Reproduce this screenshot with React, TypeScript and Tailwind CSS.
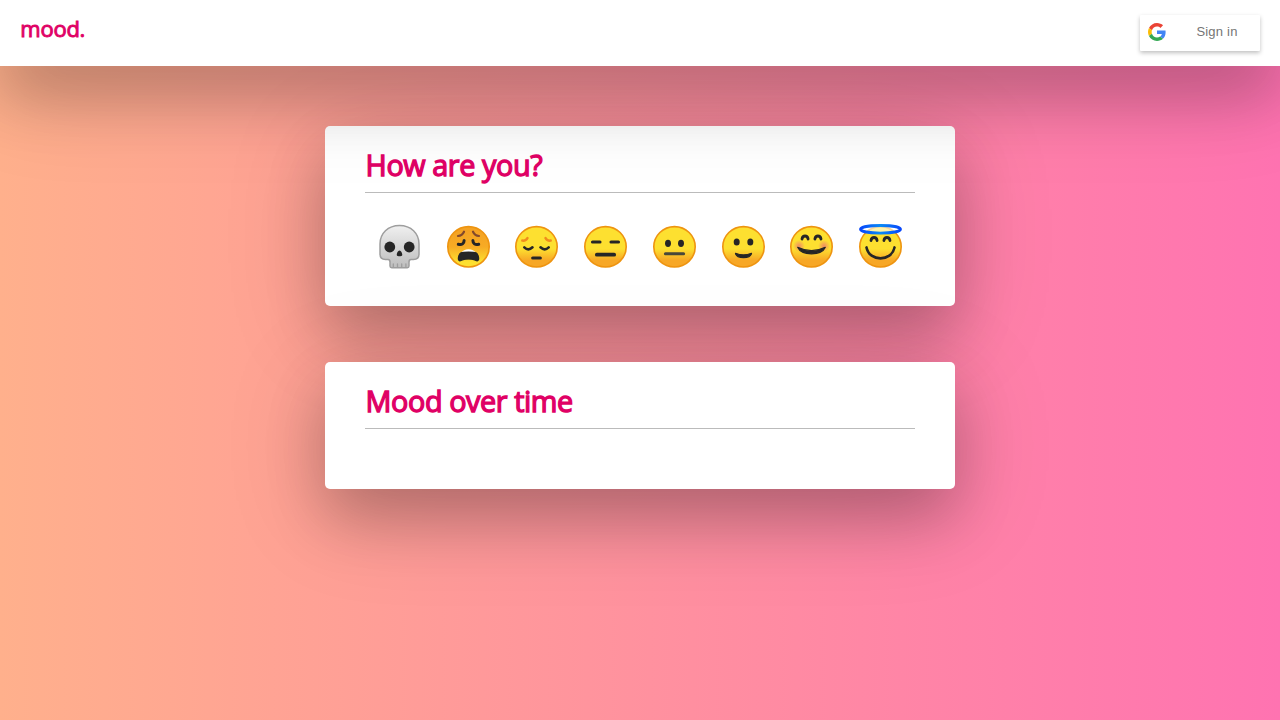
import type { ReactNode } from "react";

const INK = "#262626";

function Face({ label, fill = "url(#face)", children }: { label: string; fill?: string; children: ReactNode }) {
  return (
    <button aria-label={label} className="flex h-[50px] items-start justify-center">
      <svg viewBox="0.5 0 49 49" className="size-[49px]" fill="none" strokeLinecap="round">
        <ellipse cx="25" cy="24.8" rx="20.7" ry="20.2" fill={fill} stroke="#ee9410" strokeWidth="1.6" />
        {children}
      </svg>
    </button>
  );
}

function Defs() {
  return (
    <defs>
      <linearGradient id="face" x1="0" y1="0" x2="0" y2="1">
        <stop offset=".55" stopColor="#fde030" />
        <stop offset=".84" stopColor="#f7a726" />
      </linearGradient>
      <linearGradient id="weary" x1="0" y1="0" x2="0" y2="1">
        <stop offset=".1" stopColor="#f4a223" />
        <stop offset=".5" stopColor="#f7ab24" />
        <stop offset=".88" stopColor="#fde030" />
      </linearGradient>
      <linearGradient id="bone" x1="0" y1="0" x2="0" y2="1">
        <stop offset="0" stopColor="#f0f0f0" />
        <stop offset="1" stopColor="#bdbdbd" />
      </linearGradient>
      <linearGradient id="halo" x1="0" y1="0" x2="1" y2="0">
        <stop offset="0" stopColor="#0847fb" />
        <stop offset=".5" stopColor="#0a8bf5" />
        <stop offset="1" stopColor="#0847fb" />
      </linearGradient>
      <radialGradient id="blush">
        <stop offset="0" stopColor="#ed7770" stopOpacity=".8" />
        <stop offset="1" stopColor="#ed7770" stopOpacity="0" />
      </radialGradient>
    </defs>
  );
}

function Skull() {
  return (
    <button aria-label="Skull" className="flex h-[50px] items-start justify-center">
      <svg viewBox="0.5 0 49 49" className="size-[49px]">
        <Defs />
        <path d="M25 3.5C13.5 3.5 5.5 11.5 5.5 22V32Q5.5 37.5 11 37.5H13.5Q15.5 37.5 15.5 40V44Q15.5 45.7 17.2 45.7H32.8Q34.5 45.7 34.5 44V40Q34.5 37.5 36.5 37.5H39Q44.5 37.5 44.5 32V22C44.5 11.5 36.5 3.5 25 3.5Z" fill="url(#bone)" stroke="#9e9e9e" strokeWidth="1.5" />
        <circle cx="15.3" cy="25" r="5.4" fill={INK} />
        <circle cx="34.7" cy="25" r="5.4" fill={INK} />
        <path d="M25 28.5C23.3 28.5 22 32 22.3 33.3C22.6 34.6 27.4 34.6 27.7 33.3C28 32 26.7 28.5 25 28.5Z" fill={INK} />
        <path d="M18.8 42V45M23 42V45M27.2 42V45M31.4 42V45" stroke="#9e9e9e" strokeWidth="1.3" strokeLinecap="round" />
      </svg>
    </button>
  );
}

function MoodPicker() {
  return (
    <div className="grid grid-cols-8 pt-[29px]">
      <Skull />
      <Face label="Weary" fill="url(#weary)">
        <path d="M14.5 14C17.5 13.8 19.3 12.3 20.5 9.7M35.5 14C32.5 13.8 30.7 12.3 29.5 9.7" stroke="#83492c" strokeWidth="2.2" />
        <path d="M14.8 22.3C18.5 23.3 20.6 21.5 20.6 18.5M35.2 22.3C31.5 23.3 29.4 21.5 29.4 18.5" stroke={INK} strokeWidth="3" />
        <path d="M18 31C19.5 26 30.5 26 32 31Z" fill="#fff" />
        <path d="M17.5 30.8C20 29.8 30 29.8 32.5 30.8C34.5 31.700 35.500 36 35 37.700C34.600 39.200 33.300 39 32 38.200C28 36.800 22 36.800 18 38.200C16.700 39 15.400 39.200 15 37.700C14.500 36 15.500 31.700 17.500 30.800Z" fill={INK} stroke={INK} strokeWidth="1.200" />
      </Face>
      <Face label="Pensive">
        <path d="M10.8 18.6Q14.5 19 16 16M39.2 18.6Q35.5 19 34 16" stroke="#f08c1c" strokeWidth="2.5" />
        <path d="M12.8 25.3Q16.8 29.3 21 25.3M37.2 25.3Q33.2 29.3 29 25.3" stroke={INK} strokeWidth="2.6" />
        <path d="M21.2 36H28.8" stroke={INK} strokeWidth="3.2" />
      </Face>
      <Face label="Expressionless">
        <path d="M12 20H19.5M30.5 20H38" stroke={INK} strokeWidth="3.1" />
        <path d="M16.3 32.7H33.7" stroke={INK} strokeWidth="3.7" />
      </Face>
      <Face label="Neutral">
        <ellipse cx="18.5" cy="21.3" rx="3" ry="3.6" fill={INK} />
        <ellipse cx="31.5" cy="21.3" rx="3" ry="3.6" fill={INK} />
        <path d="M15.9 31.8H34.1" stroke="#48483a" strokeWidth="3" />
      </Face>
      <Face label="Slight smile">
        <ellipse cx="18.2" cy="20" rx="3" ry="3.6" fill={INK} />
        <ellipse cx="31.8" cy="20" rx="3" ry="3.6" fill={INK} />
        <path d="M17 31.3Q25 34.5 33 31.3C32 37 18 37 17 31.3Z" fill={INK} stroke={INK} strokeWidth="1.2" strokeLinejoin="round" />
      </Face>
      <Face label="Smiling">
        <circle cx="12.5" cy="24" r="6" fill="url(#blush)" />
        <circle cx="37.5" cy="24" r="6" fill="url(#blush)" />
        <path d="M15.5 17C16.2 13 20.900 13 21.600 17M28.400 17C29.100 13 33.800 13 34.500 17" stroke={INK} strokeWidth="2.800" />
        <path d="M11.2 25.3Q25 32 38.8 25.3C35 34 15 34 11.2 25.3Z" fill={INK} stroke={INK} strokeWidth="1.2" strokeLinejoin="round" />
      </Face>
      <Face label="Angelic">
        <path d="M15.5 18.5C16.2 14.5 20.9 14.5 21.6 18.5M28.4 18.5C29.1 14.5 33.8 14.5 34.5 18.5" stroke={INK} strokeWidth="2.8" />
        <path d="M11 25.4C14 40 36 40 39 25.4" stroke={INK} strokeWidth="2.6" />
        <ellipse cx="25" cy="7.3" rx="20" ry="3.8" fill="#fff" fillOpacity=".6" stroke="url(#halo)" strokeWidth="2.8" />
        <path d="M14 5.5Q25 2.5 36 5.500V9Q25 4.500 14 9Z" fill="#fde030" fillOpacity="0" />
      </Face>
    </div>
  );
}

function GoogleLogo() {
  return (
    <svg viewBox="0 0 48 48" className="size-[18px]">
      <path fill="#EA4335" d="M24 9.5c3.54 0 6.71 1.22 9.21 3.6l6.85-6.85C35.9 2.38 30.47 0 24 0 14.62 0 6.51 5.38 2.56 13.22l7.98 6.19C12.43 13.72 17.74 9.5 24 9.5z" />
      <path fill="#4285F4" d="M46.98 24.55c0-1.57-.15-3.09-.38-4.55H24v9.02h12.94c-.58 2.96-2.26 5.48-4.78 7.18l7.73 6c4.51-4.18 7.09-10.36 7.09-17.65z" />
      <path fill="#FBBC05" d="M10.53 28.59c-.48-1.45-.76-2.99-.76-4.59s.27-3.14.76-4.59l-7.98-6.19C.92 16.46 0 20.12 0 24c0 3.88.92 7.54 2.56 10.78l7.97-6.19z" />
      <path fill="#34A853" d="M24 48c6.48 0 11.93-2.13 15.89-5.81l-7.73-6c-2.15 1.45-4.92 2.3-8.16 2.3-6.26 0-11.57-4.22-13.47-9.91l-7.98 6.19C6.51 42.62 14.62 48 24 48z" />
    </svg>
  );
}

function Card({ title, className, children }: { title: string; className: string; children?: ReactNode }) {
  return (
    <section className={`w-[630px] rounded-[5px] bg-white px-10 pt-5 shadow-[0_30px_60px_rgba(0,0,0,0.2),0_20px_100px_rgba(0,0,0,0.17)] ${className}`}>
      <h2 className="h-[47px] border-b border-[#bbb] pl-[0.6px] text-[28.8px] leading-[37px] font-normal tracking-[-0.42px] text-[#e00065] [-webkit-text-stroke:1.3px_#e00065]">
        {title}
      </h2>
      {children}
    </section>
  );
}

export default function App() {
  return (
    <div className="flex min-h-screen flex-col items-center overflow-hidden bg-linear-to-r/srgb from-[#ffb08c] to-[#ff73b1] font-['Open_Sans',sans-serif]">
      <header className="relative z-10 flex h-[66px] w-full items-start justify-between bg-white px-5 pt-[14px] shadow-[0_30px_60px_rgba(0,0,0,0.2),0_20px_100px_rgba(0,0,0,0.17)]">
        <h1 className="pl-[0.3px] text-[22px] leading-[28px] tracking-[-0.25px] text-[#e00065] [-webkit-text-stroke:0.9px_#e00065]">mood.</h1>
        <button className="mt-px flex h-9 w-[120px] items-start rounded-[1px] bg-white pt-2 pl-2 font-['Liberation_Sans',sans-serif] text-[13px] tracking-[0.21px] text-[#757575] shadow-[0_2px_4px_rgba(0,0,0,0.25)]">
          <GoogleLogo />
          <span className="flex-1 pl-2 text-center leading-[18px]">Sign in</span>
        </button>
      </header>
      <main className="mt-[60px] flex flex-col gap-14">
        <Card title="How are you?" className="h-[180px]">
          <MoodPicker />
        </Card>
        <Card title="Mood over time" className="h-[127px]" />
      </main>
    </div>
  );
}
